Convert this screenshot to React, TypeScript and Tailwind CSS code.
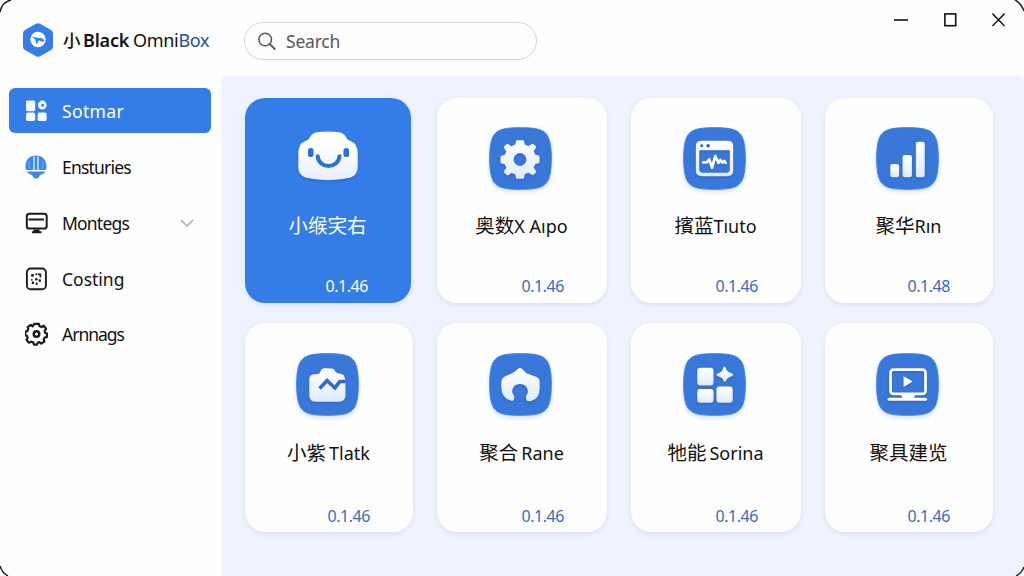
import { useState } from 'react';
import type { ReactNode } from 'react';
import clsx from 'clsx';

interface NavItem {
  label: string;
  icon: ReactNode;
  height: string;
  tracking: string;
  expandable?: boolean;
}

interface AppCard {
  id: string;
  cjk: string;
  latin?: string;
  latinClass?: string;
  version: string;
  icon: ReactNode;
}

const LogoIcon = () => (
  <svg width="32" height="36" viewBox="0 0 32 36" className="shrink-0">
    <path
      d="M14 1.8Q16 .7 18 1.8L29 8Q31 9.200 31 11.500V24.500Q31 26.800 29 28L18 34.200Q16 35.300 14 34.200L3 28Q1 26.800 1 24.500V11.500Q1 9.200 3 8Z"
      fill="#357ee9"
    />
    <circle cx="16" cy="17.500" r="7.700" fill="#fff" />
    <path d="M9.800 14.500 15 15.800Q20 15.500 22.500 18.200L21 20 17 18.200 14.500 22.500 13.300 17.600Z" fill="#357ee9" />
  </svg>
);

const DashboardIcon = () => (
  <svg width="22" height="22" viewBox="0 0 22 22" fill="#f4f9ff">
    <rect x="1" y="0.500" width="9.200" height="10.700" rx="1.800" />
    <rect x="1" y="12.600" width="9.200" height="8.400" rx="1.800" />
    <rect x="12.600" y="12.600" width="9" height="8.400" rx="1.500" />
    <path
      fillRule="evenodd"
      d="M17.300.6a4.300 4.500 0 1 1 0 9 4.300 4.500 0 0 1 0-9Zm.4 3.100a1.500 1.500 0 1 0 0 3 1.500 1.500 0 0 0 0-3Z"
    />
  </svg>
);

const GlobeIcon = () => (
  <svg width="22" height="25" viewBox="0 0 22 25">
    <path d="M11 .5C17.500.5 21.500 5.200 21.500 11c0 4.500-1.300 7.500-5.300 8.500-1.600.5-1.700 1.700-2.500 2.900-.6 1.200-4.300 1.600-5.200 0-.8-1.400-1-2.400-2.600-3C1.800 18.200.5 15 .5 11 .5 5.200 4.500.5 11 .5Z" fill="#3b87ee" />
    <path d="M9 1.500V15M13 1.500V15" stroke="#eaf3ff" strokeWidth="1.300" fill="none" />
    <path d="M5 6C3.600 8.500 3.800 11.500 4.500 13.500M17.500 6c1.100 2.500 1 5 .2 7.500" stroke="#7db2f6" strokeWidth=".8" fill="none" />
    <path d="M0 15.700h22" stroke="#fff" strokeWidth="1.600" />
  </svg>
);

const MonitorIcon = () => (
  <svg width="23" height="22" viewBox="0 0 23 22" fill="none" stroke="#1b1b1d" strokeWidth="2">
    <rect x="1.800" y="1.700" width="19.900" height="14.800" rx="2.600" />
    <path d="M3.500 7.600h15.500M7 20.200h9.500M8.500 18.500h6" />
  </svg>
);

const DiceIcon = () => (
  <svg width="23" height="24" viewBox="0 0 23 24" fill="none" stroke="#1b1b1d">
    <rect x="1.900" y="1.500" width="19" height="20.700" rx="3.800" strokeWidth="1.900" />
    <g fill="#1b1b1d" stroke="none">
      <circle cx="7.500" cy="8.300" r="1.500" />
      <circle cx="11.300" cy="7.300" r="1" />
      <circle cx="11.400" cy="12.300" r="1.200" />
      <circle cx="6.800" cy="12.800" r=".9" />
      <rect x="6.800" y="14.500" width="2.200" height="2.600" rx=".6" />
      <rect x="10.800" y="15.500" width="1.800" height="2.600" rx=".6" />
      <rect x="13.700" y="12.300" width="2.200" height="2.600" rx=".6" />
    </g>
    <path d="M12.800 7.400h2.600v3.200" strokeWidth="1.600" />
  </svg>
);

const GearIcon = () => (
  <svg width="23" height="24" viewBox="-12 -12 24 24" fill="none" stroke="#1b1b1d" strokeWidth="2.300" strokeLinejoin="round">
    <path d="M-2.500-10.500h5L3.300-8l2 .8L7.500-8.600 10-5.500 8.500-3.200l.5 2 2 .8v3.500l-2.500.7-1 1.900L8.200 8 5 10 3 8.500l-1.500.5L.5 11h-3l-1-2.300-2-.7-2.400 1.100-2.500-3 1.200-2.300-.6-1.600-2-.9v-3.500l2.300-.9.900-1.800L-9.200-7.200-6-9.500l2 1.600Z" />
    <circle r="2.900" strokeWidth="2.500" />
  </svg>
);

const SearchIcon = () => (
  <svg width="20" height="20" viewBox="0 0 20 20" fill="none" stroke="#555759" strokeLinecap="round">
    <circle cx="8" cy="8.300" r="7" strokeWidth="1.700" />
    <path d="m13 13.300 5.600 5.600" strokeWidth="2" />
  </svg>
);

/* Rounded blue tile, children are drawn in its 64x64 space */
const Tile = ({ children }: { children: ReactNode }) => (
  <svg width="63" height="63" viewBox="0 0 64 64" className="overflow-visible drop-shadow-[0_2px_2px_rgba(70,100,160,0.22)]">
    <defs>
      <linearGradient id="glyph" x1="0" y1="0" x2="0" y2="1">
        <stop offset="0" stopColor="#ffffff" />
        <stop offset="1" stopColor="#dfebfc" />
      </linearGradient>
    </defs>
    <path
      d="M32 .7C48 .7 54.500 2.500 58.500 7.500 62.300 12.500 63.300 22 63.300 32S62.300 51.500 58.500 56.500C54.500 61.500 48 63.300 32 63.300S9.500 61.500 5.500 56.500C1.700 51.500 .7 42 .7 32S1.700 12.500 5.500 7.500C9.500 2.500 16 .7 32 .7Z"
      fill="#3977d8"
      stroke="#3384ea"
    />
    <g className="drop-shadow-[0_1px_1px_rgba(20,60,140,0.35)]">{children}</g>
  </svg>
);

const FaceIcon = () => (
  <svg width="62" height="50" viewBox="0 0 62 50" className="-mt-1 overflow-visible drop-shadow-[0_1px_1px_rgba(20,70,160,0.5)]">
    <path d="M18.500 1.500Q31-.4 43.500 1.500Q47.500 2.500 49.500 7Q51 9.600 54.500 10.500Q60.500 12.500 60.700 22V37Q60.300 44.500 53 46.800Q42 49.200 31 49.200T9 46.800Q1.600 44.500 1.300 37V22Q1.500 12.500 7.500 10.500Q11 9.600 12.500 7Q14.500 2.500 18.500 1.500Z" fill="url(#face)" />
    <defs>
      <linearGradient id="face" x1="0" y1="0" x2="0" y2="1">
        <stop offset=".3" stopColor="#fff" />
        <stop offset="1" stopColor="#e6effc" />
      </linearGradient>
    </defs>
    <rect x="11" y="17" width="5.500" height="9" rx="2.600" fill="#2e70d3" />
    <rect x="46.500" y="17" width="5.500" height="9" rx="2.600" fill="#2e70d3" />
    <path d="M20.700 25.200C21.500 38.300 41.500 38.300 42.500 25.200" fill="none" stroke="#2e70d3" strokeWidth="4" strokeLinecap="round" />
  </svg>
);

const CogGlyph = () => (
  <g transform="translate(31.500 33)">
    <path
      fillRule="evenodd"
      fill="url(#glyph)"
      d="M-3-19.500h6q1 0 1.200 1.200l.6 3 3.800 1.600 3.400-2.100q1-.7 1.900.2l2 2q.9.9.2 1.900l-2.200 3.300 1.700 3.700 3.100.7q1.100.3 1.100 1.500v5q0 1.100-1.100 1.400l-3.200.7-1.600 3.600 2.200 3.300q.7 1-.2 1.900l-2 2q-.9.900-1.900.2l-3.400-2.100-3.800 1.500-.6 3Q4 19.500 3 19.500h-6q-1 0-1.200-1.200l-.6-3-3.800-1.600-3.400 2.200q-1 .6-1.900-.3l-2-2q-.9-.9-.2-1.900l2.200-3.300-1.600-3.600-3.200-.7q-1.100-.3-1.100-1.400v-5q0-1.200 1.100-1.500l3.100-.7 1.700-3.700-2.200-3.300q-.7-1 .2-1.900l2-2q.9-.9 1.900-.2l3.400 2.100 3.800-1.600.6-3Q-4-19.500-3-19.500ZM0-6.500a6.500 6.500 0 1 0 0 13 6.500 6.500 0 0 0 0-13Z"
    />
  </g>
);

const PulseGlyph = () => (
  <g>
    <path
      fillRule="evenodd"
      fill="url(#glyph)"
      d="M19 14h26q6 0 6 5.500v25q0 5.500-6 5.500H19q-6 0-6-5.500v-25Q13 14 19 14Zm-2.500 9.500V43q0 3.500 3.500 3.500h24Q47.500 46.500 47.500 43V23.500Z"
    />
    <circle cx="19" cy="19" r="1.500" fill="#2d5eae" />
    <circle cx="25.500" cy="19" r="1.800" fill="#2d5eae" />
    <path d="M20.500 36h3.700l2.500-3.200L29.500 41.500l3.200-12 3.300 7 2-3 2 2.800 2-1.800 1.500 2" fill="none" stroke="#fff" strokeWidth="2.700" strokeLinejoin="round" strokeLinecap="round" />
  </g>
);

const BarsGlyph = () => (
  <g fill="url(#glyph)">
    <rect x="14.500" y="37.500" width="9" height="13.500" rx="2.300" />
    <rect x="27" y="28.500" width="9.500" height="22.500" rx="2.300" />
    <rect x="40.500" y="15" width="9" height="36" rx="2.300" />
  </g>
);

const FolderGlyph = () => (
  <g>
    <path d="M18 21.500h3.500q2.500 0 3.200-2.500.8-3 3.300-3.500l8.500.2q2.200.2 3 2.300.8 2 3 2.500l4 .8Q49 21.800 49.500 25l.8 3v15q0 6.500-6.500 6.500H19.500Q13.500 49.500 13.500 43V26.500Q13.500 22 18 21.500Z" fill="url(#glyph)" />
    <path d="m24 36 7.500-8 8 7.500 5-6.500h6" fill="none" stroke="#2d6bcd" strokeWidth="3.600" />
  </g>
);

const HouseGlyph = () => (
  <path
    fill="url(#glyph)"
    d="M29.500 16Q31.500 14.300 33.500 16L38 20.500 48.500 24.500Q51.300 26 51.500 29V36Q51.300 46.500 43 48.800L40 49Q37.700 48.700 37.700 46.500V43.500Q40 41 39.500 38.500 38.500 31.500 31.500 31.500 24.500 31.500 23.500 38.500 23.200 41 25.500 43.500V46.500Q25.500 48.700 23 48.800 12.500 46 12.500 35V29Q12.500 26 15.500 24L25.500 19.500Z"
  />
);

const SparkGridGlyph = () => (
  <g fill="url(#glyph)">
    <rect x="14.500" y="15" width="16.500" height="18" rx="3" />
    <rect x="14.500" y="36.500" width="16.500" height="14" rx="3" />
    <rect x="34" y="34" width="16.500" height="16.500" rx="3" />
    <path d="M41.500 13.800q1.400 0 1.800 1.400.9 3 4 4.500l3 1.500q1.400 1 0 2l-3 1.500q-3 1-4 4-.9 1.500-1.800 0-1-3.200-4-4.200l-3-1.300q-1.300-1 0-2l3-1.500q3-1.500 3.400-4.500.3-1.400.6-1.400Z" />
  </g>
);

const VideoGlyph = () => (
  <g>
    <rect x="14.800" y="17" width="35.500" height="24.500" rx="3" fill="none" stroke="#fff" strokeWidth="2.800" />
    <path d="M28 23.500 37.300 29 28 34.500Z" fill="#fff" />
    <path d="M25 41.500h15.500l-2 4.500H27Z" fill="#fff" />
    <path d="M13.300 47h37" stroke="#fff" strokeWidth="3.200" strokeLinecap="round" />
    <path d="M20 44h5M40.500 44h6" stroke="#3977d8" strokeWidth="1" />
  </g>
);

const navItems: NavItem[] = [
  { label: 'Sotmar', icon: <DashboardIcon />, height: 'h-[45px]', tracking: 'tracking-[0.35px]' },
  { label: 'Ensturies', icon: <GlobeIcon />, height: 'h-[68px]', tracking: 'tracking-[-0.8px]' },
  { label: 'Montegs', icon: <MonitorIcon />, height: 'h-[44px]', tracking: 'tracking-[-0.8px]', expandable: true },
  { label: 'Costing', icon: <DiceIcon />, height: 'h-[67px]', tracking: 'tracking-[0px]' },
  { label: 'Arnnags', icon: <GearIcon />, height: 'h-[44px]', tracking: 'tracking-[-1px]' },
];

const cards: AppCard[] = [
  { id: 'face', cjk: '小缑宎右', version: '0.1.46', icon: <FaceIcon /> },
  { id: 'cog', cjk: '奥数', latin: 'X Aıpo', version: '0.1.46', icon: <Tile><CogGlyph /></Tile> },
  { id: 'pulse', cjk: '擯蓝', latin: 'Tıuto', version: '0.1.46', icon: <Tile><PulseGlyph /></Tile> },
  { id: 'bars', cjk: '聚华', latin: 'Rın', version: '0.1.48', icon: <Tile><BarsGlyph /></Tile> },
  { id: 'folder', cjk: '小紫', latin: 'Tlatk', latinClass: 'ml-[3px]', version: '0.1.46', icon: <Tile><FolderGlyph /></Tile> },
  { id: 'house', cjk: '聚合', latin: 'Rane', latinClass: 'ml-[3px]', version: '0.1.46', icon: <Tile><HouseGlyph /></Tile> },
  { id: 'spark', cjk: '牠能', latin: 'Sorina', latinClass: 'ml-[3px]', version: '0.1.46', icon: <Tile><SparkGridGlyph /></Tile> },
  { id: 'video', cjk: '聚具建览', version: '0.1.46', icon: <Tile><VideoGlyph /></Tile> },
];

const WindowControls = () => (
  <div className="flex items-center gap-[36px] self-start pt-[11px] pr-[19px]">
    <svg width="14" height="14" viewBox="0 0 14 14" className="-ml-0.5"><path d="M0 8h14" stroke="#111" strokeWidth="1.600" /></svg>
    <svg width="13" height="14" viewBox="0 0 13 14" className="mt-0.5"><rect x=".9" y=".9" width="10.800" height="11.800" fill="none" stroke="#111" strokeWidth="1.600" /></svg>
    <svg width="13" height="14" viewBox="0 0 13 14" className="mt-0.5 -ml-px"><path d="m.4.600 12.200 12.400M12.600.6.4 13" stroke="#111" strokeWidth="1.400" /></svg>
  </div>
);

export default function App() {
  const [active, setActive] = useState('Sotmar');
  const [selected, setSelected] = useState('face');

  return (
    <div className="relative flex h-[576px] w-[1024px] flex-col overflow-hidden bg-[#fefefe] font-['Noto_Sans','Noto_Sans_CJK_SC',sans-serif] text-[#111]">
      <header className="flex h-[76px] shrink-0">
        <div className="flex w-[244px] items-center pt-[3px] pl-[22px] whitespace-nowrap">
          <LogoIcon />
          <div className="ml-[9px] flex items-baseline pt-px text-[18px] leading-6">
            <span className="w-5 text-[17.500px] font-medium">小</span>
            <span className="w-[50px] font-semibold tracking-[-0.2px]">Black</span>
            <span className="tracking-[-0.3px]">
              Omni<span className="text-[#2a4f91]">Box</span>
            </span>
          </div>
        </div>
        <label className="mt-[22px] flex h-[38px] w-[293px] items-center gap-[10px] rounded-full border-[1.5px] border-[#d5d5d7] pl-[13px]">
          <SearchIcon />
          <input
            type="text"
            placeholder="Search"
            className="w-full bg-transparent text-[17.500px] tracking-[-0.2px] text-[#444] outline-none placeholder:text-[#555759]"
          />
        </label>
        <div className="flex-1" />
        <WindowControls />
      </header>

      <div className="flex flex-1">
        <nav className="w-[221px] shrink-0 pt-3 pl-[9px]">
          {navItems.map((item) => (
            <button
              key={item.label}
              onClick={() => setActive(item.label)}
              className={clsx(
                'flex w-[202px] items-center rounded-md pr-[17px] pl-4 text-left text-[17.500px]',
                item.height,
                active === item.label && 'bg-[#347de7] text-white',
              )}
            >
              <span className="flex w-[37px] shrink-0">{item.icon}</span>
              <span className={clsx('flex-1 pt-px', item.tracking)}>{item.label}</span>
              {item.expandable && (
                <svg width="14" height="8" viewBox="0 0 14 8" fill="none" stroke="#aaa" strokeWidth="1.500">
                  <path d="m1 1 6 6 6-6" />
                </svg>
              )}
            </button>
          ))}
        </nav>

        <main className="grid flex-1 grid-cols-[168px_170px_170px_168px] grid-rows-[205px_209px] content-start gap-x-6 gap-y-5 rounded-t-md bg-[#eff3fe] pt-[22px] pl-6">
          {cards.map((card, index) => {
            const isSelected = selected === card.id;
            const lowerRow = index > 3;
            return (
              <button
                key={card.id}
                onClick={() => setSelected(card.id)}
                className={clsx(
                  'flex flex-col items-center rounded-[20px] shadow-[0_2px_5px_rgba(90,110,160,0.14)]',
                  isSelected ? 'bg-[#347de7] text-white' : 'bg-[#fefefe]',
                  index === 0 && 'mr-0.5',
                  lowerRow ? 'pt-[29px]' : 'pt-[28px]',
                )}
              >
                <span className={clsx('flex h-16 items-center', index === 0 ? '-ml-px' : '-ml-[3px]')}>{card.icon}</span>
                <span className={clsx('-ml-px flex items-baseline text-[19.500px] leading-7 whitespace-nowrap', lowerRow ? 'mt-[23px]' : 'mt-[22px]')}>
                  {card.cjk}
                  {card.latin && <span className={clsx('text-[18px] whitespace-pre', card.latinClass)}>{card.latin}</span>}
                </span>
                <span
                  className={clsx(
                    'self-end pr-[43px] text-[16px] leading-6 tracking-[-0.45px]',
                    lowerRow ? 'mt-[37px]' : 'mt-[34px]',
                    isSelected ? 'text-white' : 'text-[#376cc0]',
                  )}
                >
                  {card.version}
                </span>
              </button>
            );
          })}
        </main>
      </div>

      {/* window frame corners */}
      <svg className="pointer-events-none absolute inset-0" width="1024" height="576" fill="none">
        <path d="M0 576V562Q1 573 12 576ZM1024 576V565Q1022 573 1015 576Z" fill="#fff" />
        <path d="M0 12Q2 2 11 0M1015 0Q1021 3 1024 11M0 566Q2 573 8 576M1024 567Q1022 573 1016 576" stroke="#222" strokeWidth="1.500" />
      </svg>
    </div>
  );
}
